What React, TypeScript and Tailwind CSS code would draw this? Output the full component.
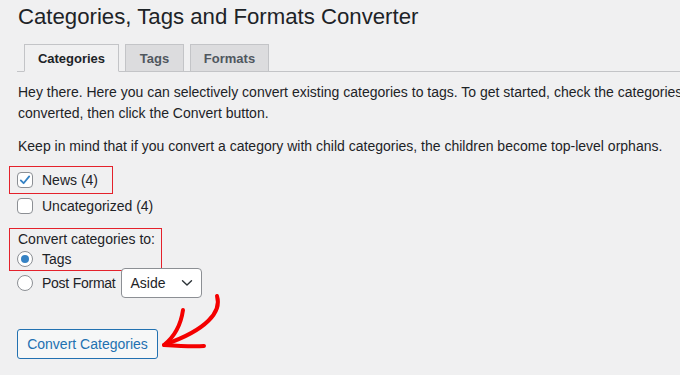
import React from 'react';

function Checkbox({ checked }: { checked?: boolean }) {
  return (
    <span className="flex h-[16px] w-[16px] shrink-0 items-center justify-center rounded-[4px] border border-[#8c8f94] bg-white">
      {checked && (
        <svg width="14" height="14" viewBox="0 0 14 14" fill="none">
          <path d="M2.8 7.4 L5.6 10.2 L11.2 3.4" stroke="#3582c4" strokeWidth="1.8" strokeLinecap="round" strokeLinejoin="round" />
        </svg>
      )}
    </span>
  );
}

function Radio({ checked }: { checked?: boolean }) {
  return (
    <span className="flex h-[16px] w-[16px] shrink-0 items-center justify-center rounded-full border border-[#8c8f94] bg-white">
      {checked && <span className="h-[8px] w-[8px] rounded-full bg-[#3582c4]" />}
    </span>
  );
}

export default function App() {
  const tabs = [
    { label: 'Categories', width: 'w-[95px]', active: true },
    { label: 'Tags', width: 'w-[59px]', active: false },
    { label: 'Formats', width: 'w-[79px]', active: false },
  ];

  return (
    <div className="relative h-[375px] w-[680px] overflow-hidden bg-[#f0f0f1] font-['Liberation_Sans',Arial,sans-serif] text-[#1d2327]">
      <div className="pl-[17px]">
        <h1 className="pt-[2px] pl-px text-[22.2px] font-normal leading-[30px]">Categories, Tags and Formats Converter</h1>

        <div className="mt-[12px] flex gap-[6px] border-b border-[#c3c4c7] pl-[7px]">
          {tabs.map(tab => (
            <div
              key={tab.label}
              className={
                tab.active
                  ? `${tab.width} -mb-px flex h-[28px] items-center justify-center border border-[#c3c4c7] border-b-[#f0f0f1] bg-[#f0f0f1] pt-px text-[13px] font-bold text-[#1d2327]`
                  : `${tab.width} -mb-px flex h-[28px] items-center justify-center border border-[#c3c4c7] bg-[#dcdcde] pt-px text-[13px] font-bold text-[#50575e]`
              }
            >
              {tab.label}
            </div>
          ))}
        </div>

        <div className="pl-px text-[14px] leading-[21px]">
          <p className="mt-[10px] whitespace-nowrap">
            Hey there. Here you can selectively convert existing categories to tags. To get started, check the categories
            <br />
            converted, then click the Convert button.
          </p>
          <p className="mt-[12px] whitespace-nowrap">
            Keep in mind that if you convert a category with child categories, the children become top-level orphans.
          </p>
        </div>

        <div className="text-[14px]">
          <div className="-ml-[8px] mt-[9px] flex h-[28px] w-[104px] items-center gap-[9px] border border-[#e4212b] pl-[7px]">
            <Checkbox checked />
            <span>News (4)</span>
          </div>
          <div className="flex h-[24px] items-center gap-[9px]">
            <Checkbox />
            <span>Uncategorized (4)</span>
          </div>

          <div className="-ml-[8px] mt-[10px] w-[153px] border border-[#e4212b] pb-px pl-[8px] pt-0">
            <div className="flex h-[20px] items-center">Convert categories to:</div>
            <div className="-ml-px flex h-[20px] items-center gap-[9px]">
              <Radio checked />
              <span>Tags</span>
            </div>
          </div>

          <div className="-mt-[3px] flex h-[30px] items-center">
            <Radio />
            <span className="ml-[9px] tracking-[-0.25px]">Post Format</span>
            <div className="ml-[5px] flex h-[30px] w-[81px] items-center justify-between rounded-[4px] border border-[#8c8f94] bg-white pl-[9px] pr-[8px]">
              <span>Aside</span>
              <svg width="12" height="8" viewBox="0 0 12 8" fill="none">
                <path d="M1.5 1.8 L6 6 L10.5 1.8" stroke="#2c3338" strokeWidth="1.4" strokeLinecap="round" strokeLinejoin="round" />
              </svg>
            </div>
          </div>

          <button className="mt-[31px] flex h-[30px] w-[141px] items-center justify-center rounded-[3px] border border-[#2271b1] bg-[#f6f7f7] text-[14px] text-[#2271b1]">
            Convert Categories
          </button>
        </div>
      </div>

      <svg className="pointer-events-none absolute left-0 top-0" width="680" height="375" viewBox="0 0 680 375" fill="none">
        <path d="M217 296 C222 312 206 330 166 344" stroke="#f40000" strokeWidth="4" strokeLinecap="round" />
        <path d="M183 310 C181 324 174 337 164 345" stroke="#f40000" strokeWidth="4" strokeLinecap="round" />
        <path d="M164 345 C178 346 192 347 204 346" stroke="#f40000" strokeWidth="4" strokeLinecap="round" />
      </svg>
    </div>
  );
}
